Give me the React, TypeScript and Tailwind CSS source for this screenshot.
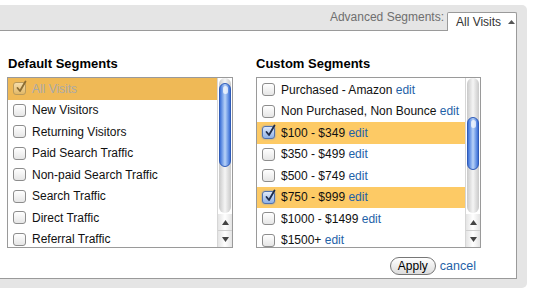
import React from 'react'

type Item = { label: string; checked?: boolean; disabled?: boolean; edit?: boolean }

const defaultSegments: Item[] = [
  { label: 'All Visits', checked: true, disabled: true },
  { label: 'New Visitors' },
  { label: 'Returning Visitors' },
  { label: 'Paid Search Traffic' },
  { label: 'Non-paid Search Traffic' },
  { label: 'Search Traffic' },
  { label: 'Direct Traffic' },
  { label: 'Referral Traffic' },
]

const customSegments: Item[] = [
  { label: 'Purchased - Amazon', edit: true },
  { label: 'Non Purchased, Non Bounce', edit: true },
  { label: '$100 - $349', edit: true, checked: true },
  { label: '$350 - $499', edit: true },
  { label: '$500 - $749', edit: true },
  { label: '$750 - $999', edit: true, checked: true },
  { label: '$1000 - $1499', edit: true },
  { label: '$1500+', edit: true },
]

function Checkbox({ checked, disabled }: { checked?: boolean; disabled?: boolean }) {
  const box = checked
    ? disabled
      ? 'border-[#b99a5c] bg-gradient-to-b from-[#f6deaa] to-[#e2b867]'
      : 'border-[#4f72b0] bg-gradient-to-b from-[#dfe9fa] to-[#8fb1e6] shadow-[0_0_2px_#6f93d6]'
    : 'border-[#8d8d8d] bg-gradient-to-b from-white to-[#e6e6e6]'
  return (
    <span className={`relative w-[13px] h-[13px] shrink-0 rounded-[3px] border ${box}`}>
      {checked && (
        <svg className="absolute left-[1px] top-[-3px]" width="13" height="14" viewBox="0 0 13 14">
          <path
            d="M2.5 8 L5 11 L10.5 1.5"
            fill="none"
            stroke={disabled ? '#8a6c33' : '#1d2b4a'}
            strokeWidth="1.8"
            strokeLinecap="round"
            strokeLinejoin="round"
          />
        </svg>
      )}
    </span>
  )
}

function Arrow({ up }: { up?: boolean }) {
  return (
    <svg width="7" height="5" viewBox="0 0 7 5">
      <path d={up ? 'M0 5 L3.5 0 L7 5 Z' : 'M0 0 L3.5 5 L7 0 Z'} fill="#444" />
    </svg>
  )
}

function Scrollbar({ thumbTop, thumbHeight }: { thumbTop: number; thumbHeight: number }) {
  return (
    <div className="w-[15px] h-full flex flex-col border-l border-[#d6d6d6] bg-white">
      <div className="relative flex-1 mx-[1px] rounded-full bg-gradient-to-r from-[#c9c9c9] via-[#f5f5f5] to-[#c9c9c9]">
        <div
          className="absolute left-0 right-0 rounded-full border border-[#2f5bb8] bg-gradient-to-r from-[#3c6fd6] via-[#b9d3f8] to-[#3c6fd6]"
          style={{ top: thumbTop, height: thumbHeight }}
        >
          <div className="mx-auto mt-[2px] w-[5px] h-[8px] rounded-full bg-white/70" />
        </div>
      </div>
      <div className="h-[16px] mt-[1px] flex items-center justify-center bg-gradient-to-r from-[#e4e4e4] via-white to-[#e4e4e4]">
        <Arrow up />
      </div>
      <div className="h-[17px] flex items-center justify-center border-t border-[#cfcfcf] bg-gradient-to-r from-[#e4e4e4] via-white to-[#e4e4e4]">
        <Arrow />
      </div>
    </div>
  )
}

function SegmentList({
  items,
  highlight,
  offset,
  thumbTop,
  thumbHeight,
}: {
  items: Item[]
  highlight: string
  offset: string
  thumbTop: number
  thumbHeight: number
}) {
  return (
    <div className="flex h-[171px] border border-[#9a9a9a] bg-white overflow-hidden">
      <div className={`flex-1 flex flex-col ${offset}`}>
        {items.map((item) => (
          <div
            key={item.label}
            className={`h-[21.5px] shrink-0 flex items-center gap-[6px] pl-[5px] ${item.checked ? highlight : ''}`}
          >
            <Checkbox checked={item.checked} disabled={item.disabled} />
            <span className={`whitespace-nowrap ${item.disabled ? 'text-[#a9a9a9]' : 'text-[#111]'}`}>
              {item.label}
              {item.edit && <span className="text-[#1e62a8]"> edit</span>}
            </span>
          </div>
        ))}
      </div>
      <Scrollbar thumbTop={thumbTop} thumbHeight={thumbHeight} />
    </div>
  )
}

export default function App() {
  return (
    <div
      className="w-[535px] h-[299px] bg-white overflow-hidden text-[12px]"
      style={{ fontFamily: '"Liberation Sans", Arial, sans-serif' }}
    >
      <div className="ml-[-10px] mt-[5px] w-[537px] h-[283px] bg-[#e5e5e5] rounded-[5px] pr-[10px] pb-[9px] flex flex-col">
        <div className="h-[25px] shrink-0 flex items-end justify-end">
          <span className="mb-[4px] mr-[3px] text-[#6f6f6f]">Advanced Segments:</span>
          <div className="relative z-10 mb-[-1px] w-[70px] h-[19px] flex items-center pl-[8px] whitespace-nowrap bg-white border border-b-0 border-[#9a9a9a] rounded-t-[2px] text-[#333]">
            All Visits
            <span className="ml-[7px] mb-[1px] flex">
              <svg width="7" height="4" viewBox="0 0 7 4">
                <path d="M0 4 L3.5 0 L7 4 Z" fill="#555" />
              </svg>
            </span>
          </div>
        </div>
        <div className="flex-1 bg-white border border-[#9a9a9a] pl-[16px] pr-[35px] pt-[25px] flex flex-col">
          <div className="flex gap-[23px]">
            <div className="w-[226px] flex flex-col">
              <h2 className="h-[16px] mb-[5px] text-[13px] leading-[16px] font-bold text-black pl-[1px]">Default Segments</h2>
              <SegmentList
                items={defaultSegments}
                highlight="bg-[#efb956]"
                offset=""
                thumbTop={5}
                thumbHeight={84}
              />
            </div>
            <div className="w-[225px] flex flex-col">
              <h2 className="h-[16px] mb-[5px] text-[13px] leading-[16px] font-bold text-black">Custom Segments</h2>
              <SegmentList
                items={customSegments}
                highlight="bg-[#fdca65]"
                offset="pt-[1px]"
                thumbTop={39}
                thumbHeight={53}
              />
              <div className="mt-[9px] flex items-center justify-end gap-[4px] pr-[5px]">
                <button className="h-[18px] w-[46px] rounded-full border border-[#777] bg-gradient-to-b from-white to-[#dcdcdc] text-[12px] leading-none text-black">
                  Apply
                </button>
                <a className="text-[#1e62a8] text-[12.5px]">cancel</a>
              </div>
            </div>
          </div>
        </div>
      </div>
    </div>
  )
}
